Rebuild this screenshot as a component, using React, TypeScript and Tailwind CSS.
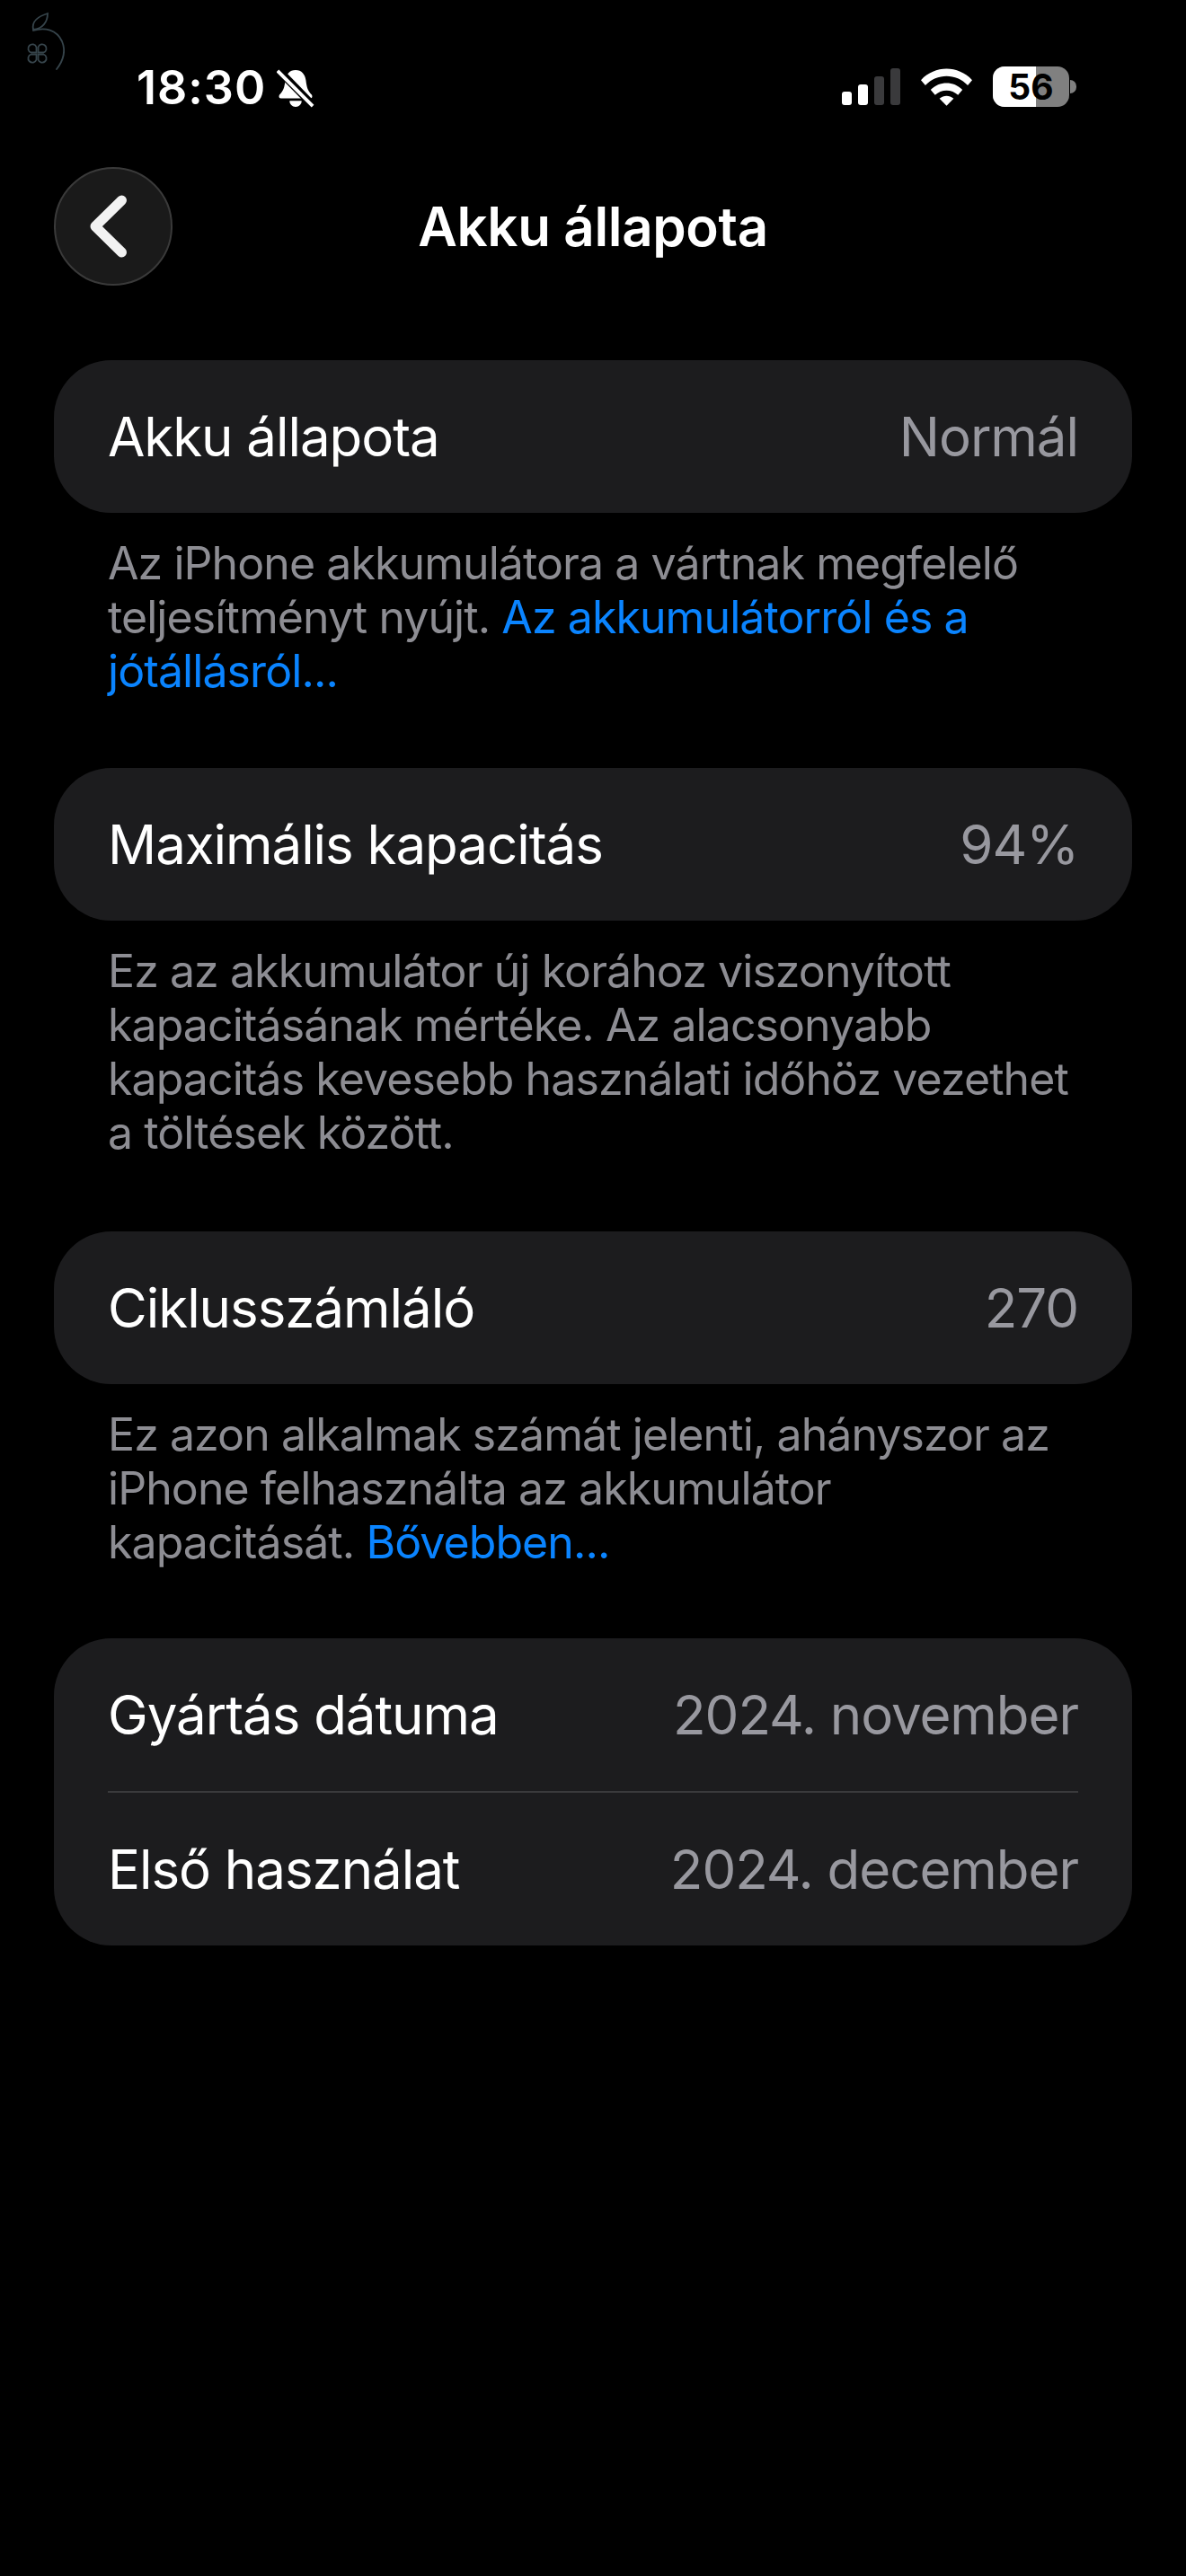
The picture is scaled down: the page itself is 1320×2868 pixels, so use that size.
import React from 'react';

const Row = ({ label, value }: { label: string; value: string }) => (
  <div className="flex h-[170px] items-center justify-between px-[60px]">
    <span className="text-white">{label}</span>
    <span className="text-[#98989f]">{value}</span>
  </div>
);

const Card = ({ className, children }: { className?: string; children: React.ReactNode }) => (
  <section className={`overflow-hidden rounded-[64px] bg-[#1c1c1e] text-[60px] tracking-[-1.05px] ${className ?? ''}`}>{children}</section>
);

const Note = ({ children }: { children: React.ReactNode }) => (
  <p className="mt-[26px] px-[60px] text-[50px] leading-[60px] tracking-[-0.92px] text-[#8d8d93]">{children}</p>
);

const Link = ({ children }: { children: React.ReactNode }) => <span className="text-[#0a84ff]">{children}</span>;

const StatusBar = () => (
  <div className="flex h-[186px] items-start justify-between pl-[152px] pr-[122px] pt-[68px]">
    <div className="flex items-center gap-[12px]">
      <span className="text-[52px] font-semibold leading-[60px] tracking-[1px] text-white">18:30</span>
      <svg width="42" height="44" viewBox="0 0 44 46" fill="none">
        <path d="M22 2c7 0 11 5 12 12 1 8 2 12 7 17 1 2 0 4-2 4H5c-2 0-3-2-2-4 5-5 6-9 7-17 1-7 5-12 12-12z" fill="#fff" />
        <path d="M15 38h14c0 4-3 7-7 7s-7-3-7-7z" fill="#fff" />
        <path d="M1 1l42 43" stroke="#000" strokeWidth="9" />
        <path d="M1 3l41 41" stroke="#fff" strokeWidth="4" />
      </svg>
    </div>
    <div className="flex items-center gap-[23px] pt-[6px]">
      <div className="flex items-end gap-[7px]">
        <div className="h-[15px] w-[11px] rounded-[3px] bg-white" />
        <div className="h-[23px] w-[11px] rounded-[3px] bg-white" />
        <div className="h-[32px] w-[11px] rounded-[3px] bg-[#3a3a3c]" />
        <div className="h-[41px] w-[11px] rounded-[3px] bg-[#3a3a3c]" />
      </div>
      <svg width="57" height="42" viewBox="0 0 58 42" fill="#fff">
        <path d="M0 13C16-4 42-4 58 13l-5 6C40 5 18 5 5 19z" />
        <path d="M11 24c10-10 26-10 36 0l-5 6c-7-7-19-7-26 0z" />
        <path d="M21 34c5-4 11-4 16 0l-8 8z" />
      </svg>
      <div className="flex items-center gap-[1px]">
        <div className="relative flex h-[45px] w-[85px] items-center justify-center rounded-[13px] bg-[#808080]">
          <div className="absolute inset-y-0 left-0 w-[48px] rounded-l-[13px] bg-white" />
          <span className="relative text-[39px] font-bold leading-[45px] text-black">56</span>
        </div>
        <div className="h-[15px] w-[7px] rounded-r-full bg-[#808080]" />
      </div>
    </div>
  </div>
);

const Clover = () => <path d="M40.5 58.5H34.5a4.7 4.7 0 1 1 6-6z" />;

const Watermark = () => (
  <svg className="absolute left-0 top-0" width="100" height="100" viewBox="0 0 100 100" fill="none" stroke="#36444b" strokeWidth="1.8" strokeLinecap="round">
    <path d="M53 15C43 18 35 24 37 33C47 32 53 25 53 15z" />
    <path d="M37 34C50 30 63 33 69 46C74 58 70 68 63 77" />
    <Clover />
    <g transform="matrix(-1 0 0 1 83 0)"><Clover /></g>
    <g transform="matrix(1 0 0 -1 0 119)"><Clover /></g>
    <g transform="matrix(-1 0 0 -1 83 119)"><Clover /></g>
  </svg>
);

export default function App() {
  return (
    <div className="relative min-h-[2868px] bg-black font-['Inter','Liberation_Sans',sans-serif]">
      <Watermark />
      <StatusBar />
      <div className="relative flex h-[132px] items-center justify-center">
        <button className="absolute left-[60px] top-0 flex h-[132px] w-[132px] items-center justify-center rounded-full border-2 border-[#3a3a3a] bg-[#1a1a1a] pr-[11px]">
          <svg width="41" height="70" viewBox="0 0 41 70" fill="none" stroke="#f2f2f2" strokeWidth="11" strokeLinecap="round" strokeLinejoin="round">
            <path d="M35.5 6L6 35l29.5 29" />
          </svg>
        </button>
        <h1 className="text-[60px] font-semibold tracking-[-0.35px] text-white">Akku állapota</h1>
      </div>
      <div className="mt-[83px] px-[60px]">
        <Card>
          <Row label="Akku állapota" value="Normál" />
        </Card>
        <Note>
          Az iPhone akkumulátora a vártnak megfelelő teljesítményt nyújt. <Link>Az akkumulátorról és a jótállásról...</Link>
        </Note>
        <Card className="mt-[78px]">
          <Row label="Maximális kapacitás" value="94%" />
        </Card>
        <Note>
          Ez az akkumulátor új korához viszonyított kapacitásának mértéke. Az alacsonyabb kapacitás kevesebb használati időhöz vezethet a töltések között.
        </Note>
        <Card className="mt-[80px]">
          <Row label="Ciklusszámláló" value="270" />
        </Card>
        <Note>
          Ez azon alkalmak számát jelenti, ahányszor az iPhone felhasználta az akkumulátor kapacitását. <Link>Bővebben...</Link>
        </Note>
        <Card className="mt-[77px]">
          <Row label="Gyártás dátuma" value="2024. november" />
          <div className="mx-[60px] h-[2px] bg-[#3a3a3c]" />
          <Row label="Első használat" value="2024. december" />
        </Card>
      </div>
    </div>
  );
}
